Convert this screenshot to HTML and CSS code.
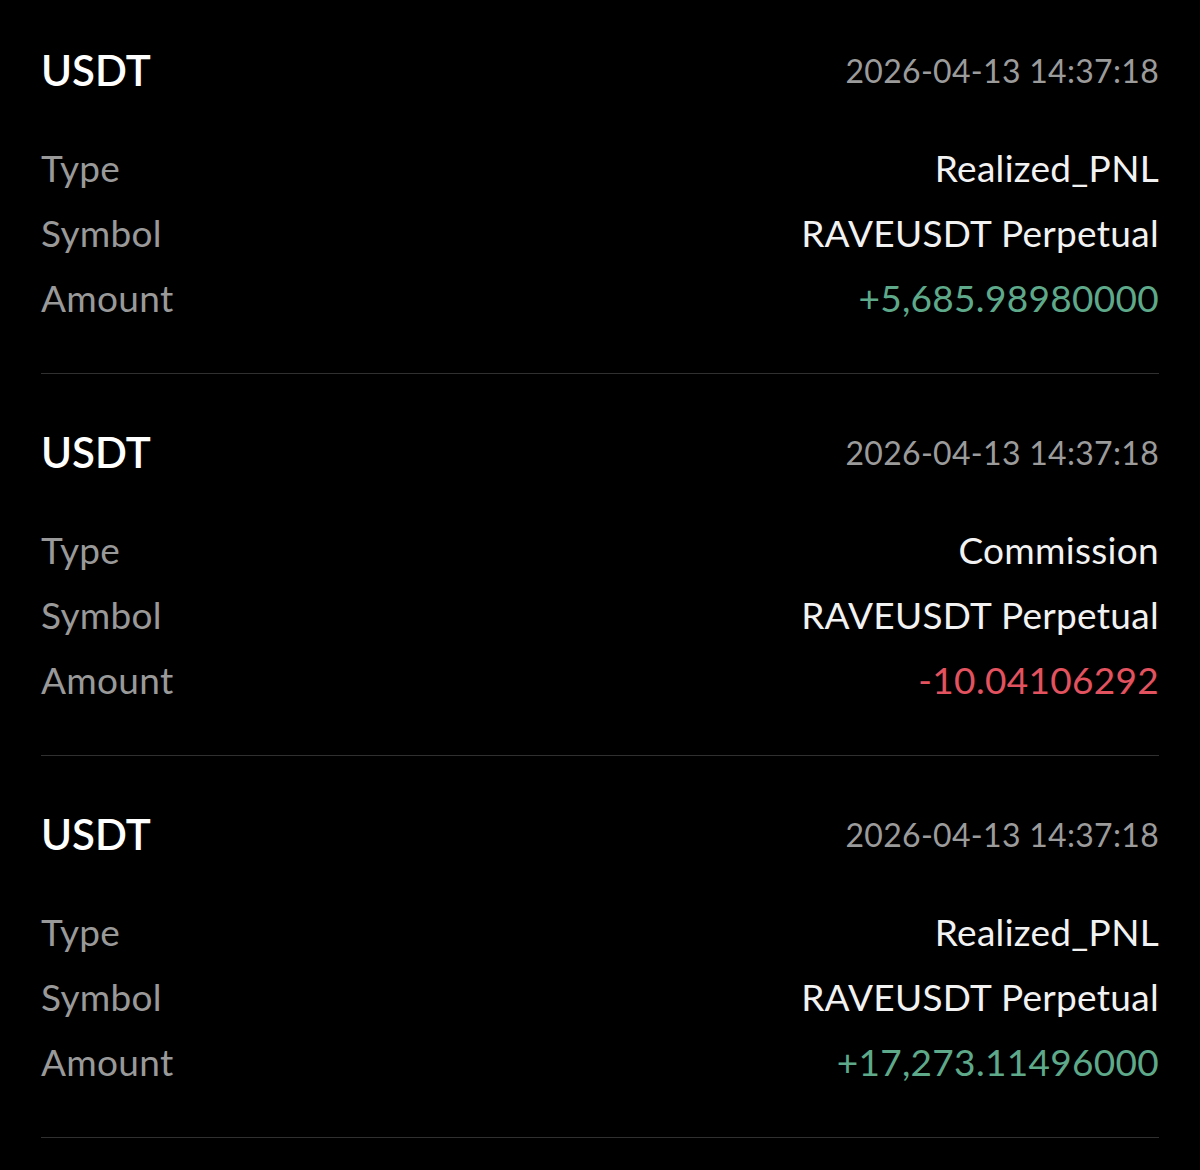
FILE: index.html
```html
<!DOCTYPE html>
<html lang="en">
<head>
    <meta charset="UTF-8">
    <meta name="viewport" content="width=device-width, initial-scale=1.0">
    <title>Transaction History</title>
    <link rel="stylesheet" href="styles.css">
</head>
<body>
    <div class="history-list">
        <div class="record">
            <div class="record-header">
                <span class="asset">USDT</span>
                <span class="time">2026-04-13 14:37:18</span>
            </div>
            <div class="record-rows">
                <div class="row"><span class="label">Type</span><span class="value">Realized_PNL</span></div>
                <div class="row"><span class="label">Symbol</span><span class="value">RAVEUSDT Perpetual</span></div>
                <div class="row"><span class="label">Amount</span><span class="value positive">+5,685.98980000</span></div>
            </div>
        </div>

        <div class="record">
            <div class="record-header">
                <span class="asset">USDT</span>
                <span class="time">2026-04-13 14:37:18</span>
            </div>
            <div class="record-rows">
                <div class="row"><span class="label">Type</span><span class="value">Commission</span></div>
                <div class="row"><span class="label">Symbol</span><span class="value">RAVEUSDT Perpetual</span></div>
                <div class="row"><span class="label">Amount</span><span class="value negative">-10.04106292</span></div>
            </div>
        </div>

        <div class="record">
            <div class="record-header">
                <span class="asset">USDT</span>
                <span class="time">2026-04-13 14:37:18</span>
            </div>
            <div class="record-rows">
                <div class="row"><span class="label">Type</span><span class="value">Realized_PNL</span></div>
                <div class="row"><span class="label">Symbol</span><span class="value">RAVEUSDT Perpetual</span></div>
                <div class="row"><span class="label">Amount</span><span class="value positive">+17,273.11496000</span></div>
            </div>
        </div>
    </div>
</body>
</html>
```

FILE: styles.css
```css
body {
    margin: 0;
    background-color: #000;
    color: #eee;
    font-family: Lato, "Open Sans", sans-serif;
}

.history-list {
    padding: 0 41px;
}

.record {
    padding: 53px 0 43px;
    border-bottom: 1px solid #303030;
}

.record:first-child {
    padding-top: 45px;
}

.record-header {
    height: 50px;
    display: flex;
    align-items: center;
    justify-content: space-between;
}

.asset {
    font-size: 42px;
    font-weight: 600;
    color: #fff;
}

.time {
    font-size: 32px;
    letter-spacing: 0.3px;
    color: #9b9b9b;
}

.record-rows {
    margin-top: 40px;
}

.row {
    height: 65px;
    display: flex;
    align-items: center;
    justify-content: space-between;
    font-size: 37px;
    letter-spacing: 0.3px;
}

.label {
    color: #999;
}

.value {
    color: #f2f2f2;
}

.value.positive {
    color: #5ea98a;
}

.value.negative {
    color: #e2525f;
}
```
